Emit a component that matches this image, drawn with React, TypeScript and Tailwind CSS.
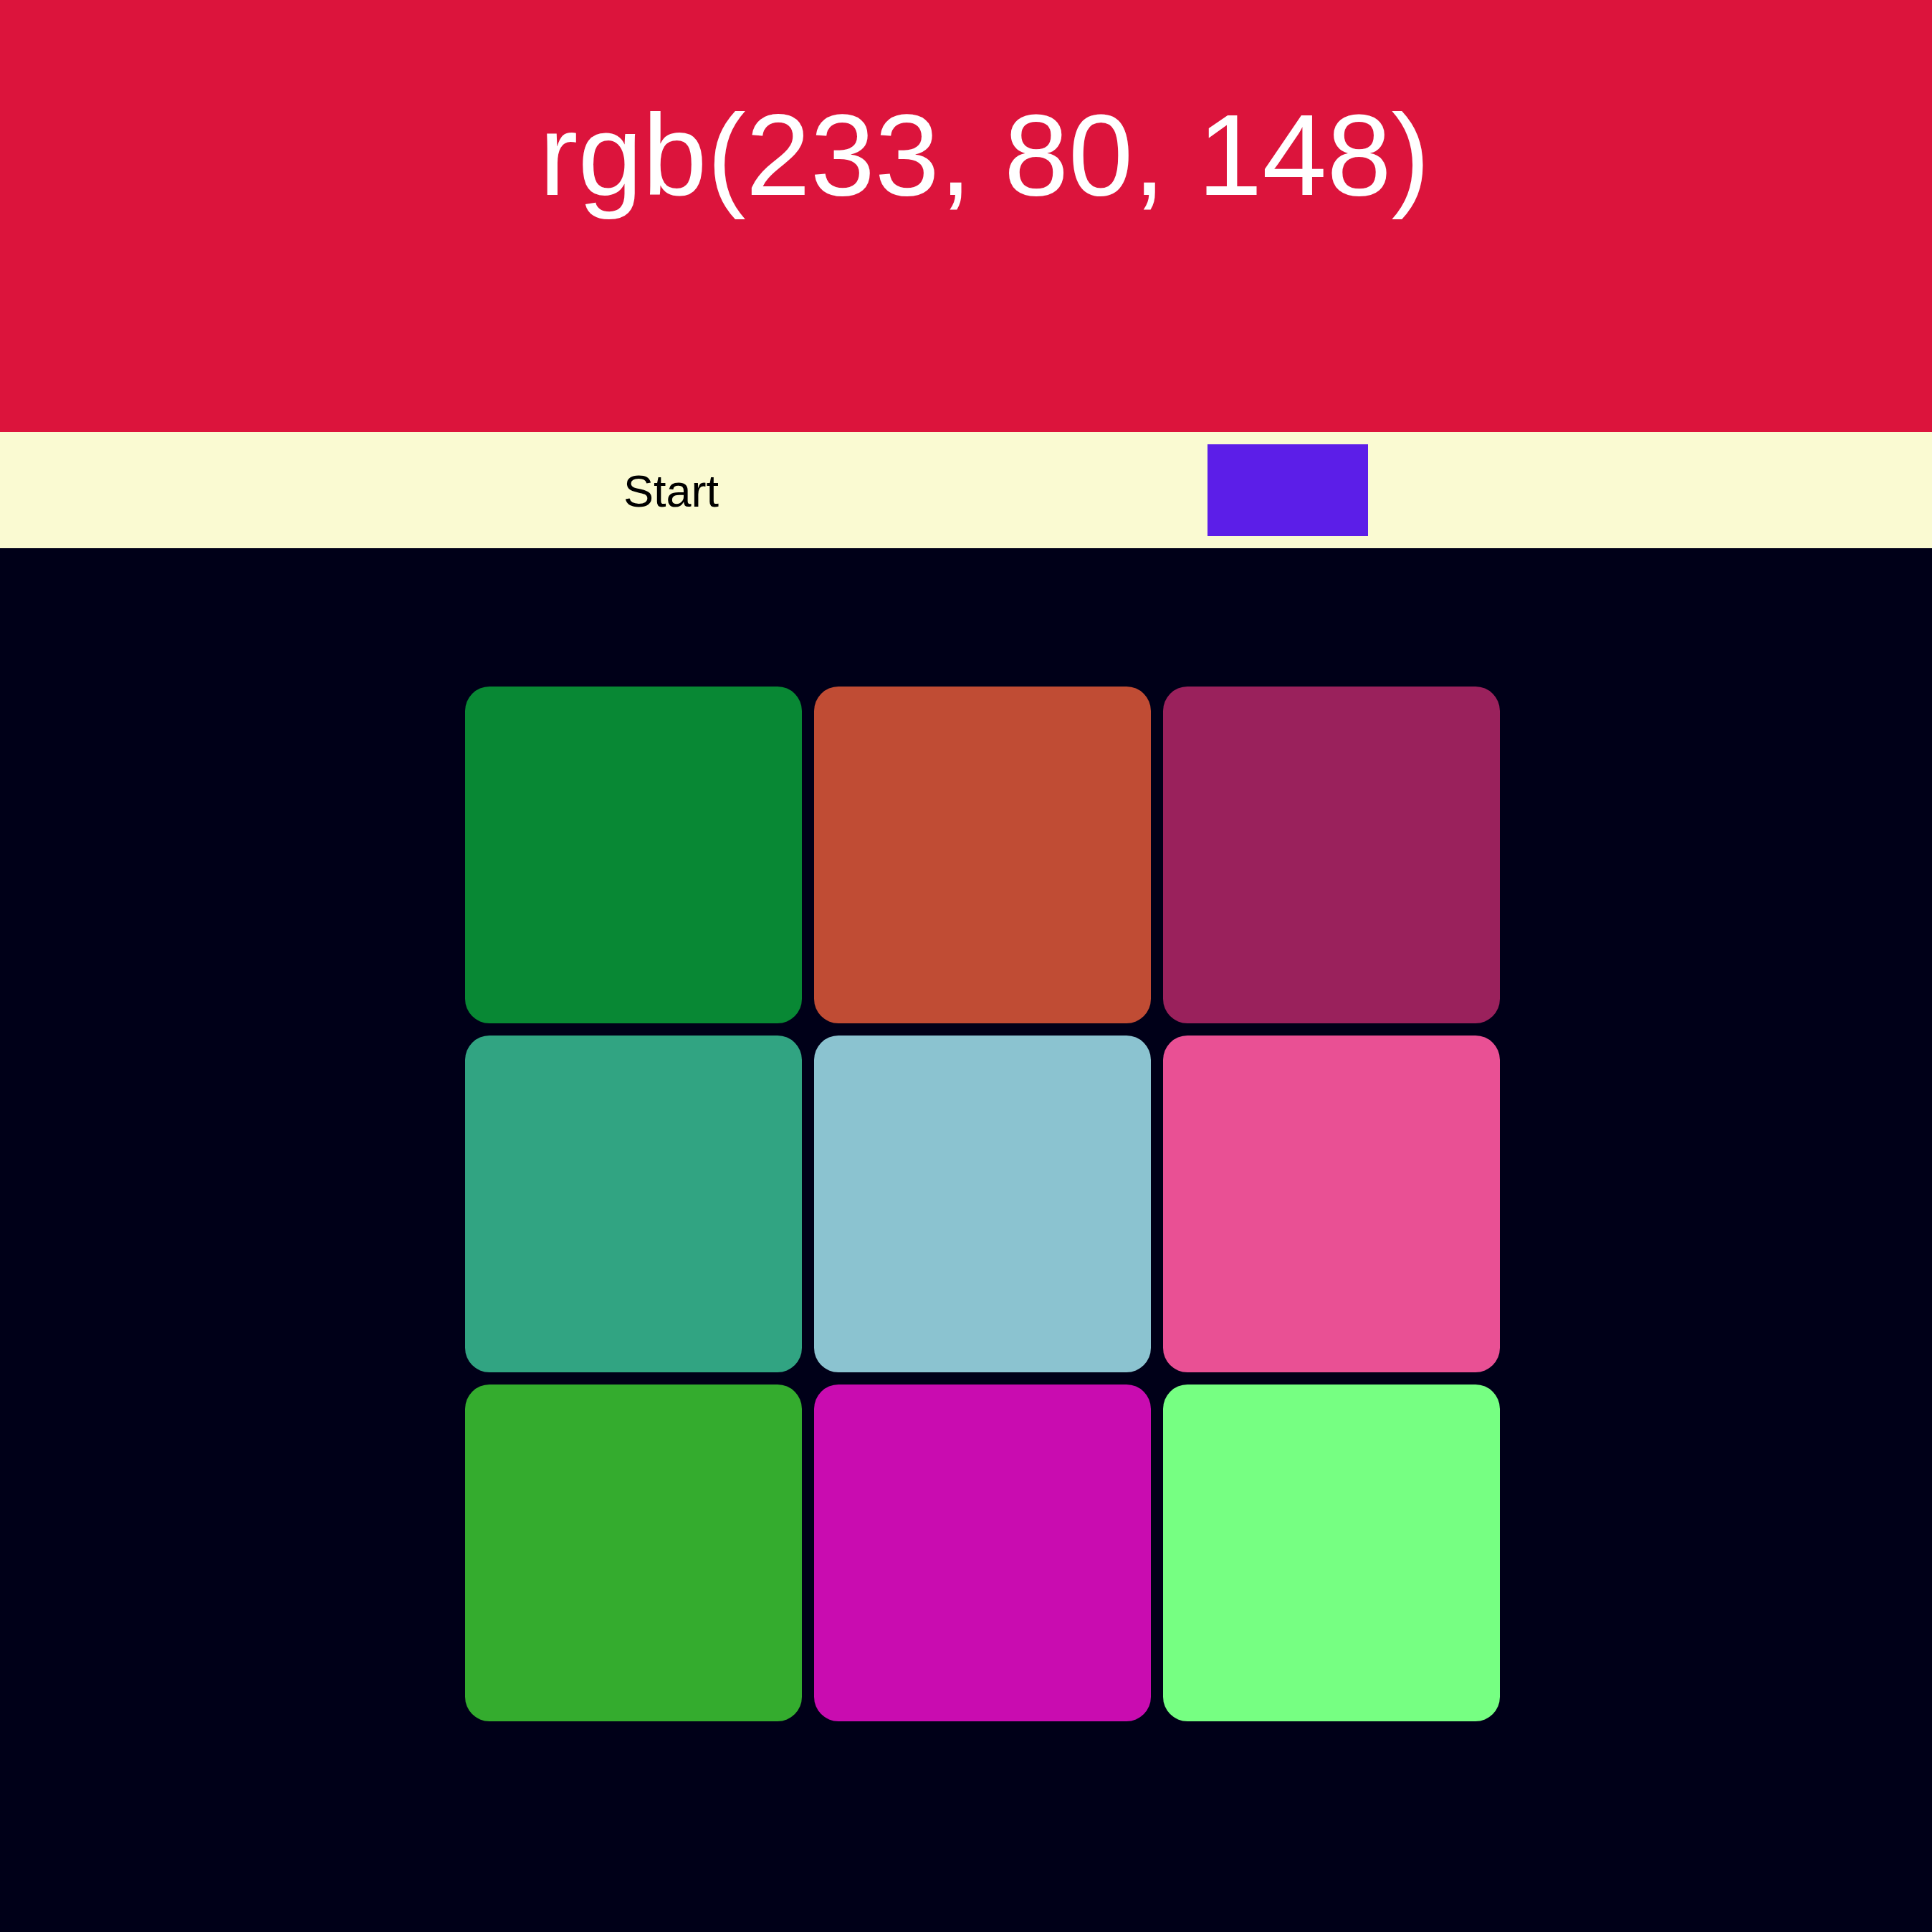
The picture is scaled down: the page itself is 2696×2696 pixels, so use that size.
import React from "react";

const tiles = [
  "#088834",
  "#c04c34",
  "#9a215c",
  "#31a482",
  "#8bc3d0",
  "#e95094",
  "#34ac2e",
  "#c90cb0",
  "#76ff82",
];

const App = () => {
  return (
    <div className="min-h-[2696px] bg-[#000018] font-['Liberation_Sans',Arial,sans-serif]">
      {/* header with the colour to guess */}
      <div className="h-[603px] bg-[#dc143c] pl-[52px] pt-[123px] text-center">
        <h1 className="text-[162px] leading-[1.15] font-normal text-white">
          rgb(233, 80, 148)
        </h1>
      </div>

      {/* controls bar */}
      <div className="flex h-[162px] items-center bg-[#fafad2] pl-[870px]">
        <button className="mt-[2px] text-[63px] leading-normal text-black">Start</button>
        <div className="ml-[682px] h-[128px] w-[224px] bg-[#5c1ee8]" />
      </div>

      {/* colour squares */}
      <div className="flex justify-center pl-[46px] pt-[193px]">
        <div className="grid grid-cols-[repeat(3,470px)] grid-rows-[repeat(3,470px)] gap-[17px]">
          {tiles.map((color) => (
            <div
              key={color}
              className="rounded-[34px]"
              style={{ backgroundColor: color }}
            />
          ))}
        </div>
      </div>
    </div>
  );
};

export default App;
